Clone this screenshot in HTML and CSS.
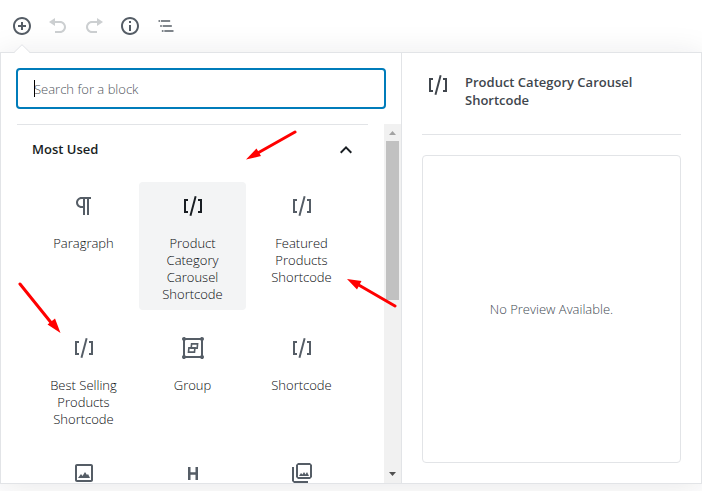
FILE: index.html
```html
<!DOCTYPE html>
<html lang="en">
<head>
<meta charset="utf-8">
<title>Block inserter</title>
<link rel="stylesheet" href="styles.css">
</head>
<body>
<svg class="defs" aria-hidden="true">
  <symbol id="shortcode" viewBox="0 0 24 24"><path d="M8.5 21.4l1.9.5 5.2-19.3-1.9-.5-5.2 19.3zM3 19h4v-2H5V7h2V5H3v14zM17 5v2h2v10h-2v2h4V5h-4z"/></symbol>
</svg>

<header class="toolbar">
  <button class="tool" aria-label="Add block"><svg viewBox="0 0 20 20"><path d="M10 1c-5 0-9 4-9 9s4 9 9 9 9-4 9-9-4-9-9-9zm0 16c-3.9 0-7-3.1-7-7s3.1-7 7-7 7 3.1 7 7-3.1 7-7 7zm1-11H9v3H6v2h3v3h2v-3h3V9h-3V6z"/></svg></button>
  <button class="tool" aria-label="Undo" disabled><svg viewBox="0 0 20 20"><path d="M12 5H7V2L1 6l6 4V7h5c2.2 0 4 1.8 4 4s-1.8 4-4 4H7v2h5c3.3 0 6-2.7 6-6s-2.7-6-6-6z"/></svg></button>
  <button class="tool" aria-label="Redo" disabled><svg viewBox="0 0 20 20"><path d="M8 5h5V2l6 4-6 4V7H8c-2.2 0-4 1.8-4 4s1.8 4 4 4h5v2H8c-3.3 0-6-2.7-6-6s2.7-6 6-6z"/></svg></button>
  <button class="tool" aria-label="Content structure"><svg viewBox="0 0 20 20"><path d="M9 5h2v2H9zM9 9h2v6H9zM10 1c-5 0-9 4-9 9s4 9 9 9 9-4 9-9-4-9-9-9zm0 16c-3.9 0-7-3.1-7-7s3.1-7 7-7 7 3.1 7 7-3.1 7-7 7z"/></svg></button>
  <button class="tool" aria-label="Block navigation"><svg viewBox="0 0 24 24"><path d="M5 5H3v2h2V5zm3 8h11v-2H8v2zm9-8H6v2h11V5zM7 11H5v2h2v-2zm0 8h2v-2H7v2zm3-2v2h11v-2H10z"/></svg></button>
</header>

<main class="popover">
  <svg class="caret" viewBox="0 0 16 9" aria-hidden="true"><path class="caret-fill" d="M0 9L8 1l8 8z"/><path class="caret-line" d="M0 8.500L8 .7l8 7.800"/></svg>

  <section class="menu">
    <input class="search" type="text" placeholder="Search for a block" aria-label="Search for a block">
    <span class="text-cursor"></span>
    <div class="results">
      <div class="panel">
        <button class="panel-title" aria-expanded="true">Most Used
          <svg viewBox="0 0 24 24"><path d="M12 8l-6 6 1.400 1.400L12 10.800l4.600 4.600L18 14z"/></svg>
        </button>
        <div class="blocks">
          <button class="block"><svg viewBox="0 0 24 24"><path d="M11 5v7H9.500C7.600 12 6 10.400 6 8.500S7.600 5 9.500 5H11m8-2H9.500C6.500 3 4 5.500 4 8.500S6.500 14 9.500 14H11v7h2V5h2v16h2V5h2V3z"/></svg><span>Paragraph</span></button>
          <button class="block active"><svg><use href="#shortcode"/></svg><span>Product Category Carousel Shortcode</span></button>
          <button class="block"><svg><use href="#shortcode"/></svg><span>Featured Products Shortcode</span></button>
          <button class="block"><svg><use href="#shortcode"/></svg><span>Best Selling Products Shortcode</span></button>
          <button class="block"><svg viewBox="0 0 24 24"><path fill-rule="evenodd" d="M2 4.732A2 2 0 114.732 2h14.536A2 2 0 1122 4.732v14.536A2 2 0 1119.268 22H4.732A2 2 0 112 19.268V4.732zM4.732 4c-.175.304-.428.557-.732.732v14.536c.304.175.557.428.732.732h14.536c.175-.304.428-.557.732-.732V4.732A2.010 2.010 0 0119.268 4H4.732z"/><path class="outline" d="M10.600 7.900h6l-.4 4.200h-6zM7.900 11.900h6l-.4 4.200h-6z"/></svg><span>Group</span></button>
          <button class="block"><svg><use href="#shortcode"/></svg><span>Shortcode</span></button>
          <button class="block" aria-label="Image"><svg viewBox="0 0 24 24"><path d="M19 5v14H5V5h14m0-2H5c-1.100 0-2 .9-2 2v14c0 1.100.9 2 2 2h14c1.100 0 2-.9 2-2V5c0-1.100-.9-2-2-2z"/><path d="M6 17l3-4 1.500 2 2.500-4 2 3 1-1 2 4z"/></svg></button>
          <button class="block" aria-label="Heading"><svg viewBox="-2 -2 24 24"><path d="M12.500 4v5.200h-5V4H5v13h2.500v-5.200h5V17H15V4z"/></svg></button>
          <button class="block" aria-label="Gallery"><svg viewBox="0 0 24 24"><path d="M20 4v12H8V4h12m0-2H8L6 4v12l2 2h12l2-2V4l-2-2z"/><path d="M9 15l2-3 1.500 1.500L14 11l1.500 2.500L17 11l2 4zM2 6v14l2 2h14v-2H4V6H2z"/></svg></button>
        </div>
      </div>
      <div class="scrollbar" aria-hidden="true">
        <svg class="up" viewBox="0 0 17 17"><path d="M5 11h7L8.500 7z"/></svg>
        <div class="track"><div class="thumb"></div></div>
        <svg class="down" viewBox="0 0 17 17"><path d="M5 6h7L8.500 10z"/></svg>
      </div>
    </div>
  </section>

  <aside class="preview">
    <div class="card">
      <svg><use href="#shortcode"/></svg>
      <h2>Product Category Carousel Shortcode</h2>
    </div>
    <div class="preview-box">No Preview Available.</div>
  </aside>
</main>

<svg class="arrows" viewBox="0 0 702 491" aria-hidden="true">
  <path class="shaft" d="M295 132L256 154M395 306L357 284M20 284L53 325"/>
  <path d="M246 159.500L256.500 148.500 261 156zM347 279L361.500 281 357 289.500zM60.500 333L47.500 324.500 55 318.500z"/>
</svg>
</body>
</html>
```
FILE: styles.css
```css
* {
  box-sizing: border-box;
}

body {
  display: flex;
  flex-direction: column;
  height: 100vh;
  margin: 0;
  overflow: hidden;
  background: #fff;
  color: #0a0c0f;
  font: 300 13px/17px "Open Sans", "Noto Sans", sans-serif;
}

svg {
  flex: none;
  width: 24px;
  height: 24px;
  fill: currentColor;
}

button {
  border: 0;
  padding: 0;
  background: none;
  color: inherit;
  font: inherit;
}

.defs {
  position: absolute;
  width: 0;
  height: 0;
}

.toolbar {
  display: flex;
  flex: none;
  height: 52px;
  padding: 8px 4px;
}

.tool {
  display: flex;
  align-items: center;
  justify-content: center;
  width: 36px;
  height: 36px;
  color: #555d66;
}

.tool svg {
  width: 20px;
  height: 20px;
}

.tool:disabled {
  color: #cccfd1;
}

.popover {
  position: relative;
  display: flex;
  flex: 1;
  min-height: 0;
  margin-bottom: 7px;
  border: 1px solid #e2e4e7;
  background: #fff;
  box-shadow: 0 3px 30px rgba(25, 30, 35, 0.1);
}

.caret {
  position: absolute;
  top: -9px;
  left: 13px;
  width: 16px;
  height: 9px;
}

.caret-fill {
  fill: #fff;
}

.caret-line {
  fill: none;
  stroke: #e2e4e7;
}

.menu {
  position: relative;
  display: flex;
  flex: none;
  flex-direction: column;
  width: 400px;
}

.search {
  flex: none;
  height: 41px;
  margin: 15px;
  border: 2px solid #007cba;
  border-radius: 4px;
  padding: 0 16px;
  background: #fff;
  color: #32373c;
  font: inherit;
  outline: 0;
}

.search::placeholder {
  color: #50565c;
  opacity: 1;
}

.text-cursor {
  position: absolute;
  top: 27px;
  left: 33px;
  width: 1px;
  height: 17px;
  background: #000;
}

.results {
  display: flex;
  flex: 1;
  min-height: 0;
  overflow: hidden;
}

.panel {
  flex: 1;
  align-self: flex-start;
  margin: 0 16px;
  border-top: 1px solid #e2e4e7;
}

.panel-title {
  display: flex;
  align-items: center;
  justify-content: space-between;
  width: 100%;
  height: 49px;
  padding: 0 10px 0 15px;
  color: #191e23;
  font-weight: 600;
}

.blocks {
  display: grid;
  grid-template-columns: repeat(3, 1fr);
  gap: 14px 2px;
  padding: 8px 13px;
}

.block {
  display: flex;
  flex-direction: column;
  align-items: center;
  gap: 17px;
  padding: 12px 8px 7px;
  border-radius: 4px;
}

.block svg {
  color: #555d66;
}

.block.active {
  background: #f3f4f5;
}

.block.active svg {
  color: #191e23;
}

.outline {
  fill: none;
  stroke: currentColor;
  stroke-width: 1.6;
}

.scrollbar {
  display: flex;
  flex: none;
  flex-direction: column;
  width: 17px;
  background: #f1f1f1;
}

.scrollbar svg {
  width: 17px;
  height: 17px;
}

.up {
  color: #a3a3a3;
}

.down {
  color: #505050;
}

.track {
  flex: 1;
  padding: 0 2px;
}

.thumb {
  height: 49%;
  background: #c1c1c1;
}

.preview {
  display: flex;
  flex: 1;
  flex-direction: column;
  gap: 20px;
  padding: 20px;
  border-left: 1px solid #e2e4e7;
}

.card {
  display: flex;
  gap: 15px;
  height: 62px;
  padding: 0 4px;
  border-bottom: 1px solid #e2e4e7;
  color: #40464d;
}

.card h2 {
  margin: 0;
  font-size: 13px;
  line-height: 18px;
  font-weight: 600;
}

.preview-box {
  display: flex;
  flex: 1;
  align-items: center;
  justify-content: center;
  border: 1px solid #e2e4e7;
  border-radius: 4px;
  color: #414a53;
}

.arrows {
  position: absolute;
  top: 0;
  left: 0;
  width: 702px;
  height: 491px;
  color: #f00;
  pointer-events: none;
}

.shaft {
  fill: none;
  stroke: #f00;
  stroke-width: 3;
  stroke-linecap: round;
}
```
